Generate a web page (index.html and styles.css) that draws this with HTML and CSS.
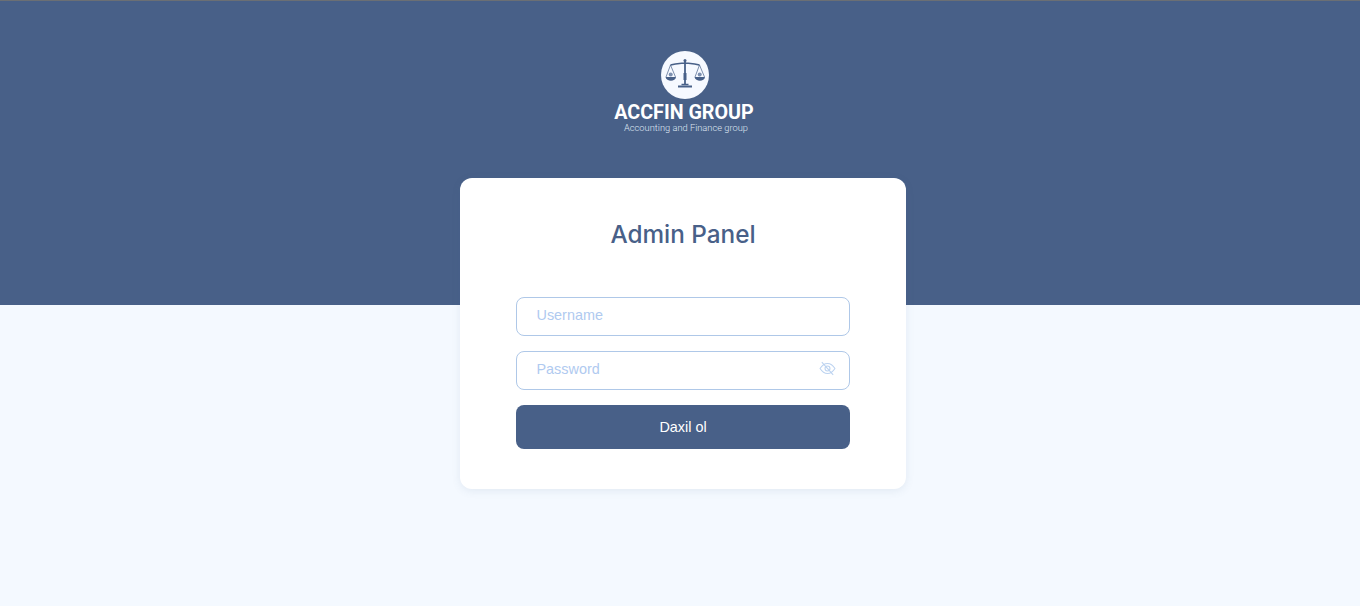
FILE: index.html
```html
<!DOCTYPE html>
<html lang="en">
<head>
<meta charset="utf-8">
<title>Admin Panel</title>
<link rel="stylesheet" href="styles.css">
</head>
<body>
<header class="hero">
  <div class="logo">
    <svg class="logo-mark" viewBox="0 0 48 48" width="48" height="48" aria-hidden="true">
      <circle cx="24" cy="24" r="24" fill="#f6f9ff"/>
      <g fill="none" stroke="#486088">
        <path d="M9.500 14 C15 12.500 19 12.500 24 12 C29 12.500 33 12.500 38.500 14" stroke-width="1.500"/>
        <path d="M24 10 V33" stroke-width="1.800"/>
        <path d="M24 22 V29" stroke-width="3"/>
        <path d="M9.500 14 L5 26 M9.500 14 L14.500 26 M38.500 14 L34 26 M38.500 14 L43.500 26" stroke-width=".7"/>
        <path d="M17 35.500 H31" stroke-width="2"/>
        <path d="M20.500 33.500 H27.500" stroke-width="1.500"/>
      </g>
      <path d="M4.500 26 H15 C14.500 31 5.500 31 4.500 26 Z M33.500 26 H44 C43.500 31 34.500 31 33.500 26 Z" fill="#486088"/>
      <circle cx="9.700" cy="23.500" r="2" fill="#7d90b0"/>
      <circle cx="38.700" cy="23.500" r="2" fill="#7d90b0"/>
      <circle cx="24" cy="9.500" r="1.500" fill="#486088"/>
    </svg>
    <div class="logo-name">ACCFIN GROUP</div>
    <div class="logo-sub">Accounting and Finance group</div>
  </div>
</header>
<main class="card">
  <h1 class="title">Admin Panel</h1>
  <form class="form">
    <div class="field"><input class="input" type="text" placeholder="Username"></div>
    <div class="field">
      <input class="input" type="password" placeholder="Password">
      <svg class="eye" viewBox="0 0 24 24" width="17" height="17" fill="none" stroke="#bcd3f0" stroke-width="1.500" aria-hidden="true">
        <path d="M1.500 12 C5 6.500 8.500 5 12 5 C15.500 5 19 6.500 22.500 12 C19 17.500 15.500 19 12 19 C8.500 19 5 17.500 1.500 12 Z"/>
        <circle cx="12" cy="12" r="3.500"/>
        <path d="M4 3 L20 21"/>
      </svg>
    </div>
    <button class="submit" type="button">Daxil ol</button>
  </form>
</main>
</body>
</html>
```
FILE: styles.css
```css
* { box-sizing: border-box; }
html, body { height: 100%; }
body {
  margin: 0;
  background: #f4f9ff;
  font-family: "Liberation Sans", Arial, sans-serif;
  overflow: hidden;
}
.hero {
  height: 305px;
  background: #486088;
  border-top: 1px solid #6b6f74;
  display: flex;
  justify-content: center;
  padding-top: 50px;
}
.logo {
  display: flex;
  flex-direction: column;
  align-items: center;
  color: #fff;
  margin-left: 8px;
}
.logo-mark { display: block; margin-left: 2px; }
.logo-name {
  font-family: Roboto, sans-serif;
  font-weight: 700;
  font-size: 19.700px;
  line-height: 18px;
  margin-top: 5px;
  white-space: nowrap;
}
.logo-sub {
  font-family: Roboto, sans-serif;
  font-weight: 300;
  font-size: 9.300px;
  line-height: 10px;
  margin: 1px 0 0 4px;
  color: #dfe6f2;
  white-space: nowrap;
}
.card {
  position: relative;
  width: 446px;
  height: 311px;
  margin: -127px auto 0;
  left: 3px;
  padding: 40px 56px 0;
  background: #fff;
  border-radius: 12px;
  box-shadow: 0 2px 8px rgba(72, 96, 136, .1);
}
.title {
  margin: 0;
  font-family: Inter, sans-serif;
  font-weight: 500;
  font-size: 24.300px;
  line-height: 32px;
  text-align: center;
  color: #486088;
}
.form {
  margin-top: 47px;
  display: flex;
  flex-direction: column;
  gap: 15px;
}
.field { position: relative; height: 39px; }
.input {
  display: block;
  width: 100%;
  height: 39px;
  padding: 0 20px 4px 19.500px;
  border: 1px solid #afc8e8;
  border-radius: 8px;
  background: #fff;
  outline: none;
  font-family: "Liberation Sans", Arial, sans-serif;
  font-size: 14.400px;
  color: #486088;
}
.input::placeholder { color: #b0caf0; opacity: 1; }
.eye { position: absolute; top: 9px; right: 14.500px; }
.submit {
  height: 44px;
  border: 0;
  border-radius: 8px;
  background: #486088;
  color: #fff;
  font-family: "Liberation Sans", Arial, sans-serif;
  font-size: 14.400px;
}
```
